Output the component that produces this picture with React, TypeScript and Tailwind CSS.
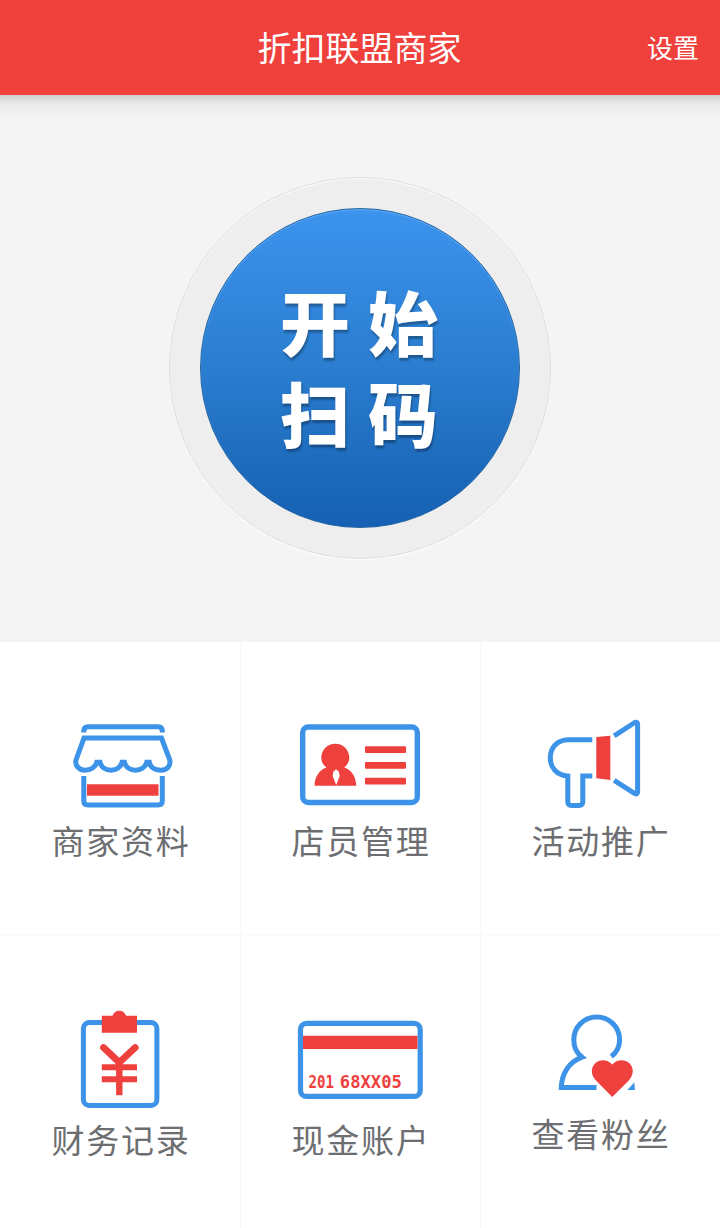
import type { ReactNode } from 'react';

const BLUE = '#3c93e8';
const RED = '#ee403d';

function ShopIcon() {
  return (
    <svg width="160" height="100" viewBox="0 0 160 100" fill="none" stroke={BLUE} strokeWidth="5">
      <path d="M43.8 22.5V21Q43.8 16.7 48 16.7H118Q122.3 16.7 122.3 21V22.5" />
      <path d="M44 28H121.5L129.6 49.5C131.3 55.5 127 60.2 121 60.2C114 60.2 110 56.5 109.3 52.3H106.7C105.5 57 101 60.2 95.5 60.2C90 60.2 85.5 57 84.5 52.3H82C80.8 57 76.5 60.2 71 60.2C65.5 60.2 61 57 60 52.3H56.7C55.5 57 51 60.2 45 60.2C38.5 60.2 34.5 55 36.2 49.5Z" />
      <path d="M43.8 66V91Q43.8 95 48 95H118Q122.3 95 122.3 91V66" />
      <path d="M47 74.2H118.5V85.8H47Z" fill={RED} stroke="none" />
    </svg>
  );
}

function StaffIcon() {
  return (
    <svg width="160" height="100" viewBox="0 0 160 100" fill={RED}>
      <rect x="22.7" y="17" width="114.6" height="75.5" rx="5.5" fill="none" stroke={BLUE} strokeWidth="5.4" />
      <path d="M34.5 75.7C35 66 39.5 60 46.5 57.5C43 54.8 41.3 51.4 41.3 47.7C41.3 39.8 47.5 33.8 55.3 33.8S69.3 39.8 69.3 47.7C69.3 51.4 67.5 54.8 64.2 57.5C71.5 60 75.7 66 76.3 75.7Z" />
      <path d="M56 59.3L58.7 61.5L59.7 66L56.2 75L52.6 66L53.5 61.5Z" fill="#fff" />
      <rect x="85" y="36.3" width="41" height="6.6" rx="1" />
      <rect x="85" y="52" width="41" height="6.8" rx="1" />
      <rect x="85" y="67.7" width="41" height="6.8" rx="1" />
    </svg>
  );
}

function MegaphoneIcon() {
  return (
    <svg width="160" height="100" viewBox="0 0 160 100" fill="none" stroke={BLUE} strokeWidth="5">
      <path d="M72.3 29.7H48.5C36 29.7 30.3 39 30.3 48C30.3 57.5 36.5 65.3 47.8 66V91.5Q47.8 95.5 51.5 95.5H59Q62.8 95.5 62.8 91.5V66H72.3" />
      <path d="M76.3 27L90.3 25.7V70L76.3 68.3Z" fill={RED} stroke="none" />
      <path d="M94.2 25.8L114.8 12.5Q117.6 11.7 117.6 14.5V82Q117.6 85 114.8 83.6L94.2 70.3" />
    </svg>
  );
}

function FinanceIcon() {
  return (
    <svg width="160" height="110" viewBox="0 0 160 110" fill="none">
      <rect x="43.4" y="22.4" width="73.5" height="83.2" rx="6" stroke={BLUE} strokeWidth="5" />
      <path d="M61.8 15.8H72.5C73.5 12.6 76.2 10.7 79.3 10.7S85 12.6 86.1 15.8H97V32.7H61.8Z" fill={RED} />
      <path d="M63.5 47.5L79.3 62.5L95.2 47.5" stroke={RED} strokeWidth="6.8" strokeLinecap="round" strokeLinejoin="round" />
      <path d="M79.3 62V95.2" stroke={RED} strokeWidth="6.4" />
      <path d="M61.8 67.2H97M61.8 79.2H97" stroke={RED} strokeWidth="6" />
    </svg>
  );
}

function CardIcon() {
  return (
    <svg width="160" height="110" viewBox="0 0 160 110" fill="none">
      <rect x="20.5" y="23.4" width="119.7" height="73" rx="6" stroke={BLUE} strokeWidth="5.2" />
      <path d="M23 35.7H137.5V49H23Z" fill={RED} />
      <g fill={RED} fontFamily="'DejaVu Sans Mono', monospace" fontSize="17.5" fontWeight="700">
        <text x="28.4" y="88" textLength="25.5" lengthAdjust="spacingAndGlyphs">201</text>
        <text x="59.8" y="88" textLength="62" lengthAdjust="spacingAndGlyphs">68XX05</text>
      </g>
    </svg>
  );
}

function FansIcon() {
  return (
    <svg width="160" height="110" viewBox="0 0 160 110" fill="none">
      <path
        d="M91.3 56.5C96.5 52.5 99.6 46.5 99.6 40C99.6 27 89.5 17 76.7 17S53.8 27 53.8 40C53.8 47 56.7 53 62 57.2C49 62 41.7 73.5 41.3 87.5H76.5"
        stroke={BLUE}
        strokeWidth="5"
      />
      <path d="M107.3 89.9L114.3 82.5L114.9 89.9Z" fill={BLUE} />
      <path
        d="M92.2 97L76 80.5C70.5 75 70.8 67.5 75.2 63.3C80 58.8 87.8 59.5 92.2 64.5C96.7 59.5 104.8 58.8 109.4 63.3C114 67.8 114 75 108.8 80.5Z"
        fill={RED}
      />
    </svg>
  );
}

interface MenuItem {
  label: string;
  icon: ReactNode;
  labelClass: string;
}

const topRow: MenuItem[] = [
  { label: '商家资料', icon: <ShopIcon />, labelClass: 'mt-[7px]' },
  { label: '店员管理', icon: <StaffIcon />, labelClass: 'mt-[7px]' },
  { label: '活动推广', icon: <MegaphoneIcon />, labelClass: 'mt-[7px]' },
];

const bottomRow: MenuItem[] = [
  { label: '财务记录', icon: <FinanceIcon />, labelClass: 'mt-1.5' },
  { label: '现金账户', icon: <CardIcon />, labelClass: 'mt-1.5' },
  { label: '查看粉丝', icon: <FansIcon />, labelClass: 'mt-0' },
];

function MenuCell({ item }: { item: MenuItem }) {
  return (
    <button className="flex flex-col items-center shadow-[inset_1px_0_0_#f8f8f8] first:shadow-none">
      {item.icon}
      <span className={`pl-0.5 text-[33px] leading-[46px] tracking-[1.8px] whitespace-nowrap text-[#6d6e71] ${item.labelClass}`}>
        {item.label}
      </span>
    </button>
  );
}

export default function App() {
  return (
    <div className="flex h-[1228px] w-[720px] flex-col bg-[#f4f4f4] font-['Noto_Sans_CJK_SC',sans-serif]">
      <header className="grid h-[95px] shrink-0 grid-cols-3 items-center bg-[#ef403c] pr-[21px] pb-0.5 pl-5 text-white">
        <span />
        <h1 className="text-center text-[34px] leading-[50px] whitespace-nowrap">折扣联盟商家</h1>
        <button className="text-right text-[26px] leading-[40px]">设置</button>
      </header>
      <div className="h-6 shrink-0 bg-linear-to-b from-[#d0d0d3] via-[#ebebeb] via-40% to-[#f4f4f4]" />

      <main className="flex h-[523px] shrink-0 flex-col items-center pt-[58px]">
        <div className="flex size-[382px] items-center justify-center rounded-full border border-[#dedede] bg-[#eeeeee] shadow-[inset_0_1px_1px_#fff,0_1px_1px_#fff]">
          <button className="flex size-[320px] flex-col items-center justify-center rounded-full border border-[#2364a5] bg-linear-to-b from-[#3c94ee] via-[#2a7dcf] to-[#1560b2] pr-0.5 pb-[5px] text-[70px] leading-[91px] font-black tracking-[18px] text-white shadow-[inset_0_1px_1px_#65aff3] text-shadow-[1px_3px_2px_rgb(0_0_0/0.3)]">
            <span className="pl-[18px]">开始</span>
            <span className="pl-[18px]">扫码</span>
          </button>
        </div>
      </main>

      <nav className="flex grow flex-col bg-white">
        <div className="grid h-[294px] grid-cols-3 border-b border-[#fafafa] [&>button]:pt-[68px]">
          {topRow.map((item) => (
            <MenuCell key={item.label} item={item} />
          ))}
        </div>
        <div className="grid grow grid-cols-3 [&>button]:pt-16">
          {bottomRow.map((item) => (
            <MenuCell key={item.label} item={item} />
          ))}
        </div>
      </nav>
    </div>
  );
}
